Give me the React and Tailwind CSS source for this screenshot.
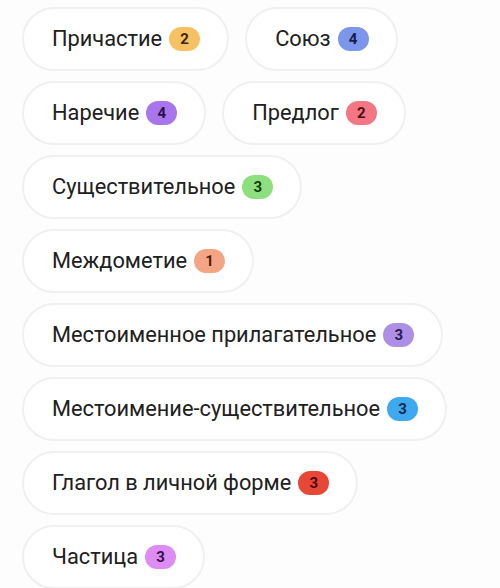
const items = [
  { label: 'Причастие', count: 2, badge: 'bg-[#f5c163] text-[#3a2800]' },
  { label: 'Союз', count: 4, badge: 'bg-[#7b96ea] text-[#14204a]' },
  { label: 'Наречие', count: 4, badge: 'bg-[#a875eb] text-[#2a1050]' },
  { label: 'Предлог', count: 2, badge: 'bg-[#f27683] text-[#4a1018]' },
  { label: 'Существительное', count: 3, badge: 'bg-[#8ee07f] text-[#133a0e]' },
  { label: 'Междометие', count: 1, badge: 'bg-[#f4a583] text-[#4a1e0c]' },
  { label: 'Местоименное прилагательное', count: 3, badge: 'bg-[#ad90e6] text-[#281850]' },
  { label: 'Местоимение-существительное', count: 3, badge: 'bg-[#3fa9f0] text-[#0c2850]' },
  { label: 'Глагол в личной форме', count: 3, badge: 'bg-[#e84636] text-[#4a0805]' },
  { label: 'Частица', count: 3, badge: 'bg-[#dc8cf2] text-[#36104a]' },
];

function Chip({ label, count, badge }) {
  return (
    <div className="h-16 rounded-full border-2 border-[#f0f0f0] bg-white pl-[28px] pr-[27px] flex items-center gap-[7px]">
      <span className="text-[21.8px] text-[#202020] leading-none">{label}</span>
      <span className={`w-[31px] h-[24px] rounded-full flex items-center justify-center text-[15px] font-bold leading-none ${badge}`}>
        {count}
      </span>
    </div>
  );
}

export default function App() {
  return (
    <div className="w-[500px] h-[588px] overflow-hidden bg-[#fdfdfd] font-['Roboto',sans-serif]">
      <div className="flex flex-wrap gap-x-4 gap-y-[10px] pl-[22px] pt-[7px]">
        {items.map((it) => (
          <Chip key={it.label} {...it} />
        ))}
      </div>
    </div>
  );
}
